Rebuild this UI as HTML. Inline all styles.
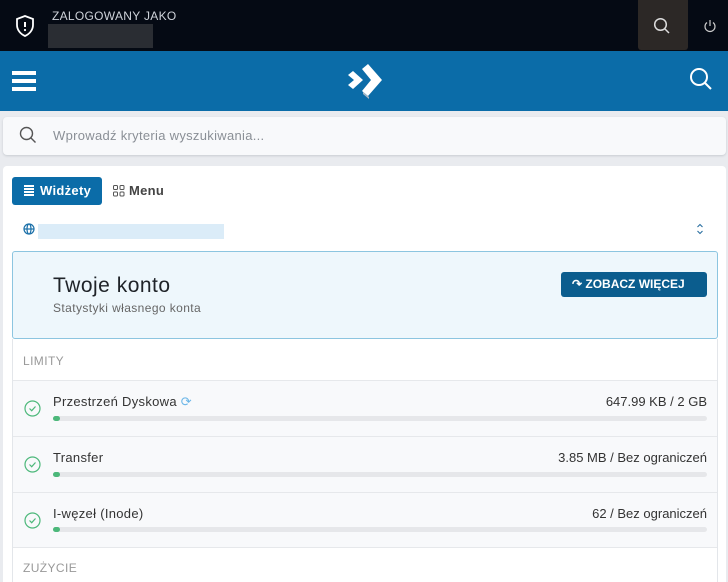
<!DOCTYPE html><html><head><meta charset="utf-8"><style>
*{box-sizing:border-box;margin:0;padding:0}
html,body{width:728px;height:582px;overflow:hidden}
body{background:#e9ebef;font-family:"Liberation Sans",sans-serif;position:relative}
.a{position:absolute}
</style></head><body>
<div class="a" style="left:0;top:0;width:728px;height:51px;background:#050a14"></div>
<svg class="a" style="left:14px;top:14px" width="22" height="24" viewBox="0 0 22 24"><path d="M11 2L19 5V11C19 16 15.5 20 11 22 6.5 20 3 16 3 11V5Z" fill="none" stroke="#fff" stroke-width="1.8"/><path d="M11 8V13" stroke="#fff" stroke-width="2"/><circle cx="11" cy="16" r="1.1" fill="#fff"/></svg>
<div class="a" style="left:52px;top:9px;color:#cfd3da;font-size:12px;letter-spacing:.3px">ZALOGOWANY JAKO</div>
<div class="a" style="left:48px;top:24px;width:105px;height:24px;background:#2a2d33"></div>
<div class="a" style="left:638px;top:0;width:50px;height:50px;background:#2c2826;border-radius:0 0 3px 3px"></div>
<svg class="a" style="left:653px;top:17px" width="18" height="18" viewBox="0 0 18 18"><circle cx="7.5" cy="7.5" r="5.8" fill="none" stroke="#ddd" stroke-width="1.5"/><path d="M12 12L16 16" stroke="#ddd" stroke-width="1.5"/></svg>
<svg class="a" style="left:703px;top:19px" width="14" height="14" viewBox="0 0 14 14"><path d="M4 3.5A5 5 0 1 0 10 3.5" fill="none" stroke="#ccc" stroke-width="1.2"/><path d="M7 1V7" stroke="#ccc" stroke-width="1.2"/></svg>
<div class="a" style="left:0;top:51px;width:728px;height:60px;background:#0b6ca8"></div>
<div class="a" style="left:12px;top:71px;width:24px;height:4px;background:#fff"></div>
<div class="a" style="left:12px;top:79px;width:24px;height:4px;background:#fff"></div>
<div class="a" style="left:12px;top:87px;width:24px;height:4px;background:#fff"></div>
<svg class="a" style="left:346px;top:61px" width="38" height="40" viewBox="0 0 38 40"><path d="M22 3L36 19 22 35 16 30 25 19 16 8Z" fill="#fff"/><path d="M23 36L17 31 17 33 23 38Z" fill="#aab8c4"/><path d="M7 10L17 19 7 28 2 24 8 19 2 14Z" fill="#fff"/></svg>
<svg class="a" style="left:689px;top:67px" width="24" height="24" viewBox="0 0 24 24"><circle cx="10" cy="10" r="8" fill="none" stroke="#fff" stroke-width="2"/><path d="M16 16L22 22" stroke="#fff" stroke-width="2"/></svg>
<div class="a" style="left:3px;top:117px;width:723px;height:38px;background:#f8f9fb;border-radius:4px;box-shadow:0 1px 2px #c8ccd2"></div>
<svg class="a" style="left:19px;top:126px" width="18" height="18" viewBox="0 0 18 18"><circle cx="7.5" cy="7.5" r="6" fill="none" stroke="#555" stroke-width="1.4"/><path d="M12 12L16.5 16.5" stroke="#555" stroke-width="1.4"/></svg>
<div class="a" style="left:53px;top:128px;color:#8a8f96;font-size:13px;letter-spacing:.3px">Wprowadź kryteria wyszukiwania...</div>
<div class="a" style="left:3px;top:166px;width:723px;height:420px;background:#fff;border-radius:4px"></div>
<div class="a" style="left:12px;top:177px;width:90px;height:28px;background:#0b6ca8;border-radius:3px"></div>
<div class="a" style="left:24px;top:185px;width:10px;height:2px;background:#fff;box-shadow:0 3px 0 #fff,0 6px 0 #fff,0 9px 0 #fff"></div>
<div class="a" style="left:40px;top:183px;color:#fff;font-size:13px;font-weight:bold;letter-spacing:.3px">Widżety</div>
<svg class="a" style="left:113px;top:185px" width="12" height="12" viewBox="0 0 12 12"><g fill="none" stroke="#555"><rect x=".5" y=".5" width="4" height="4" rx="1"/><rect x="7" y=".5" width="4" height="4" rx="1"/><rect x=".5" y="7" width="4" height="4" rx="1"/><rect x="7" y="7" width="4" height="4" rx="1"/></g></svg>
<div class="a" style="left:129px;top:183px;color:#444;font-size:13px;font-weight:bold;letter-spacing:.3px">Menu</div>
<svg class="a" style="left:23px;top:223px" width="12" height="12" viewBox="0 0 12 12"><g fill="none" stroke="#1a6fa8" stroke-width="1.2"><circle cx="6" cy="6" r="5"/><ellipse cx="6" cy="6" rx="2" ry="5"/><path d="M1 6H11"/></g></svg>
<div class="a" style="left:38px;top:224px;width:186px;height:15px;background:#dbecf8"></div>
<svg class="a" style="left:696px;top:223px" width="8" height="12" viewBox="0 0 8 12"><path d="M1.5 4L4 1.5 6.5 4M1.5 8L4 10.5 6.5 8" fill="none" stroke="#2a6fa0" stroke-width="1.1"/></svg>
<div class="a" style="left:12px;top:251px;width:706px;height:88px;background:#eef7fc;border:1px solid #8cc5e0;border-radius:3px"></div>
<div class="a" style="left:53px;top:274px;color:#1f2328;font-size:21px;letter-spacing:.5px">Twoje konto</div>
<div class="a" style="left:53px;top:301px;color:#666;font-size:12px;letter-spacing:.4px">Statystyki własnego konta</div>
<div class="a" style="left:561px;top:272px;width:146px;height:25px;background:#0b5d8e;border-radius:3px;color:#fff;font-size:12px;font-weight:bold;line-height:25px;padding-left:11px">↷ ZOBACZ WIĘCEJ</div>
<div class="a" style="left:12px;top:339px;width:706px;height:250px;border-left:1px solid #e3e6ea;border-right:1px solid #e3e6ea"></div>
<div class="a" style="left:23px;top:354px;color:#999;font-size:12px;letter-spacing:.4px">LIMITY</div>
<div class="a" style="left:13px;top:380px;width:704px;height:168px;background:#f8f9fb;border-top:1px solid #e6e8eb"></div>
<div class="a" style="left:13px;top:436px;width:704px;height:1px;background:#e6e8eb"></div>
<div class="a" style="left:13px;top:492px;width:704px;height:1px;background:#e6e8eb"></div>
<div class="a" style="left:13px;top:547px;width:704px;height:1px;background:#e6e8eb"></div>
<div class="a" style="left:23px;top:561px;color:#999;font-size:12px;letter-spacing:.4px">ZUŻYCIE</div>

<svg class="a" style="left:24px;top:400px" width="17" height="17" viewBox="0 0 17 17"><circle cx="8.5" cy="8.5" r="7.5" fill="none" stroke="#4cb87a" stroke-width="1.2"/><path d="M5.5 8.5L7.7 10.7 11.5 6.5" fill="none" stroke="#4cb87a" stroke-width="1.2"/></svg>
<div class="a" style="left:53px;top:394px;color:#333;font-size:13px;letter-spacing:.3px">Przestrzeń Dyskowa <span style="color:#6bb6e8">⟳</span></div>
<div class="a" style="right:21px;top:394px;color:#333;font-size:13px">647.99 KB / 2 GB</div>
<div class="a" style="left:53px;top:416px;width:654px;height:5px;background:#e6e7ea;border-radius:3px"><div style="width:7px;height:5px;background:#4cb87a;border-radius:3px"></div></div>

<svg class="a" style="left:24px;top:456px" width="17" height="17" viewBox="0 0 17 17"><circle cx="8.5" cy="8.5" r="7.5" fill="none" stroke="#4cb87a" stroke-width="1.2"/><path d="M5.5 8.5L7.7 10.7 11.5 6.5" fill="none" stroke="#4cb87a" stroke-width="1.2"/></svg>
<div class="a" style="left:53px;top:450px;color:#333;font-size:13px;letter-spacing:.3px">Transfer</div>
<div class="a" style="right:21px;top:450px;color:#333;font-size:13px">3.85 MB / Bez ograniczeń</div>
<div class="a" style="left:53px;top:472px;width:654px;height:5px;background:#e6e7ea;border-radius:3px"><div style="width:7px;height:5px;background:#4cb87a;border-radius:3px"></div></div>

<svg class="a" style="left:24px;top:512px" width="17" height="17" viewBox="0 0 17 17"><circle cx="8.5" cy="8.5" r="7.5" fill="none" stroke="#4cb87a" stroke-width="1.2"/><path d="M5.5 8.5L7.7 10.7 11.5 6.5" fill="none" stroke="#4cb87a" stroke-width="1.2"/></svg>
<div class="a" style="left:53px;top:506px;color:#333;font-size:13px;letter-spacing:.3px">I-węzeł (Inode)</div>
<div class="a" style="right:21px;top:506px;color:#333;font-size:13px">62 / Bez ograniczeń</div>
<div class="a" style="left:53px;top:527px;width:654px;height:5px;background:#e6e7ea;border-radius:3px"><div style="width:7px;height:5px;background:#4cb87a;border-radius:3px"></div></div>
</body></html>
